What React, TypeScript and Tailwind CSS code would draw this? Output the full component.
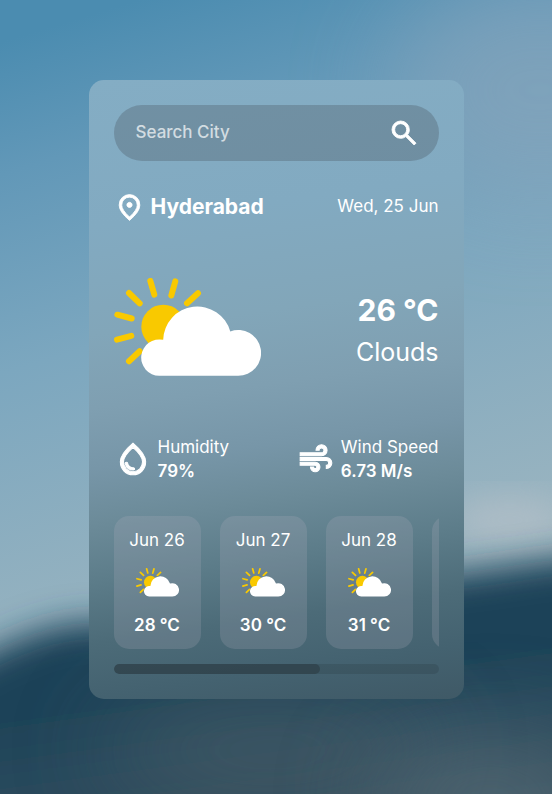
import { useState } from "react";
import type { ReactNode, UIEvent } from "react";

const forecast = [
  { day: "Jun 26", temp: 28 },
  { day: "Jun 27", temp: 30 },
  { day: "Jun 28", temp: 31 },
  { day: "Jun 29", temp: 30 },
  { day: "Jun 30", temp: 29 },
];

const paths = {
  search:
    "M784-120 532-372q-30 24-69 38t-83 14q-109 0-184.5-75.5T120-580q0-109 75.5-184.5T380-840q109 0 184.5 75.5T640-580q0 44-14 83t-38 69l252 252-56 56ZM380-400q75 0 127.5-52.5T560-580q0-75-52.5-127.5T380-760q-75 0-127.5 52.5T200-580q0 75 52.5 127.5T380-400Z",
  location:
    "M480-480q33 0 56.5-23.5T560-560q0-33-23.5-56.5T480-640q-33 0-56.5 23.5T400-560q0 33 23.5 56.5T480-480Zm0 294q122-112 181-203.5T720-552q0-109-69.5-178.5T480-800q-101 0-170.5 69.5T240-552q0 71 59 162.5T480-186Zm0 106Q319-217 239.5-334.5T160-552q0-150 96.5-239T480-880q127 0 223.5 89T800-552q0 100-79.5 217.5T480-80Z",
  drop:
    "M491-200q12-1 20.5-9.5T520-230q0-14-9-22.5t-23-7.5q-41 3-87-22.5T343-375q-2-11-10.5-18t-19.5-7q-14 0-23 10.5t-6 24.5q17 91 80 130t127 35ZM480-80q-137 0-228.5-94T160-408q0-100 79.5-217.5T480-880q161 137 240.5 254.5T800-408q0 140-91.5 234T480-80Zm0-80q104 0 172-70.5T720-408q0-73-60.5-165T480-774Q361-665 300.5-573T240-408q0 107 68 177.5T480-160Z",
  air:
    "M460-160q-50 0-85-35t-35-85h80q0 17 11.5 28.5T460-240q17 0 28.5-11.5T500-280q0-17-11.5-28.5T460-320H80v-80h380q50 0 85 35t35 85q0 50-35 85t-85 35ZM80-560v-80h540q26 0 43-17t17-43q0-26-17-43t-43-17q-26 0-43 17t-17 43h-80q0-59 40.5-99.5T620-840q59 0 99.5 40.5T760-700q0 59-40.5 99.5T620-560H80Zm660 320v-80q26 0 43-17t17-43q0-26-17-43t-43-17H80v-80h660q59 0 99.5 40.5T880-380q0 59-40.5 99.5T740-240Z",
};

function Icon({ name, className }: { name: keyof typeof paths; className: string }) {
  return (
    <svg
      viewBox="0 -960 960 960"
      fill="currentColor"
      stroke="currentColor"
      strokeWidth="26"
      className={`shrink-0 ${className}`}
      aria-hidden="true"
    >
      <path d={paths[name]} />
    </svg>
  );
}

function CloudySun({ className }: { className: string }) {
  return (
    <svg viewBox="0 0 147 98" className={className} aria-hidden="true">
      <g fill="none" stroke="#f9c900" strokeWidth="6" strokeLinecap="round">
        <path d="M36.3 2.9 40.3 16.7M61.3 3.3 57.3 17.5M15 15 25.7 25.3M84 15.3 73 25.3M3.3 36.7 17.7 40.5M3 61.7 17.3 57.9M15 83.3 25.7 73.3" />
      </g>
      <circle cx="49.3" cy="48.7" r="22" fill="#f9c900" />
      <path
        d="M45.2 97.8A18.2 18.2 0 1 1 49.2 61.8A34.2 34.2 0 0 1 116.3 53.4A22.9 22.9 0 1 1 124 97.8Z"
        fill="#fff"
      />
    </svg>
  );
}

function Backdrop() {
  return (
    <svg
      viewBox="0 0 552 794"
      preserveAspectRatio="none"
      className="absolute inset-0 -z-10 h-full w-full"
      aria-hidden="true"
    >
      <defs>
        <linearGradient id="sky" x1="0.25" y1="0" x2="0.42" y2="0.8">
          <stop offset="0" stopColor="#4b8cb0" />
          <stop offset="0.2" stopColor="#6298b8" />
          <stop offset="0.5" stopColor="#7ca7bf" />
          <stop offset="1" stopColor="#9cb5c0" />
        </linearGradient>
        <linearGradient id="hill" x1="0" y1="0" x2="0.3" y2="1">
          <stop offset="0" stopColor="#1b4358" />
          <stop offset="0.5" stopColor="#1e4359" />
          <stop offset="1" stopColor="#39525f" />
        </linearGradient>
        <filter id="soft" x="-30%" y="-30%" width="160%" height="160%">
          <feGaussianBlur stdDeviation="17" />
        </filter>
        <filter id="haze" x="-100%" y="-100%" width="300%" height="300%">
          <feGaussianBlur stdDeviation="50" />
        </filter>
      </defs>
      <rect width="552" height="794" fill="url(#sky)" />
      <ellipse cx="540" cy="90" rx="150" ry="110" fill="#86a4bb" opacity="0.7" filter="url(#haze)" />
      <ellipse cx="510" cy="520" rx="60" ry="24" fill="#b2bfc8" opacity="0.8" filter="url(#soft)" />
      <path
        d="M-80 690C-20 660 30 622 100 622C250 624 340 590 450 574C510 568 560 556 640 552V880H-80Z"
        fill="url(#hill)"
        filter="url(#soft)"
      />
      <ellipse cx="270" cy="750" rx="170" ry="36" fill="#52636b" opacity="0.8" filter="url(#haze)" />
      <ellipse cx="490" cy="800" rx="120" ry="60" fill="#5a6e78" opacity="0.75" filter="url(#haze)" />
    </svg>
  );
}

function Condition({
  icon,
  label,
  value,
}: {
  icon: ReactNode;
  label: string;
  value: string;
}) {
  return (
    <div className="flex items-center gap-1.5">
      {icon}
      <div className="text-[17px] leading-6">
        <h3>{label}</h3>
        <p className="font-semibold">{value}</p>
      </div>
    </div>
  );
}

function Forecast() {
  const [bar, setBar] = useState({ left: 0, width: 63.4 });

  const measure = (el: HTMLUListElement | null) => {
    if (!el || !el.scrollWidth) return;
    const left = (el.scrollLeft / el.scrollWidth) * 100;
    const width = (el.clientWidth / el.scrollWidth) * 100;
    setBar((b) => (b.left === left && b.width === width ? b : { left, width }));
  };

  return (
    <section className="mt-[33px]" aria-label="Forecast">
      <ul
        ref={measure}
        onScroll={(e: UIEvent<HTMLUListElement>) => measure(e.currentTarget)}
        className="flex gap-[19px] overflow-x-auto [scrollbar-width:none]"
      >
        {forecast.map(({ day, temp }) => (
          <li
            key={day}
            className="flex h-[133px] w-[87px] shrink-0 flex-col items-center justify-between rounded-[15px] bg-[#b9b4c4]/20 py-3 text-[17px] leading-6"
          >
            <h4>{day}</h4>
            <CloudySun className="w-[43px]" />
            <p className="font-semibold">{temp} °C</p>
          </li>
        ))}
      </ul>
      <div className="mt-[15px] h-2.5 overflow-hidden rounded-full bg-black/10">
        <div
          className="h-full rounded-full bg-[#2a3840]/55"
          style={{ width: `${bar.width}%`, marginLeft: `${bar.left}%` }}
        />
      </div>
    </section>
  );
}

export default function App() {
  const [city, setCity] = useState("");

  return (
    <div className="relative isolate flex min-h-screen items-start justify-center overflow-hidden px-4 py-20 font-['Inter',sans-serif] text-white">
      <Backdrop />
      <main className="w-full max-w-[375px] rounded-[15px] bg-[linear-gradient(172deg,#84adc4_0%,#82aac1_22%,#82a6b9_38%,#7f9fb1_49%,#7796a8_58%,#6c8b99_66%,#5c7c89_75%,#4c6b78_84%,#446270_92%,#3f5966_100%)] p-[25px]">
        <form
          className="flex h-14 items-center rounded-full bg-[#444f58]/30 pr-[19px] pl-[22px]"
          onSubmit={(e) => e.preventDefault()}
        >
          <input
            type="text"
            aria-label="Search City"
            placeholder="Search City"
            value={city}
            onChange={(e) => setCity(e.target.value)}
            className="min-w-0 flex-1 bg-transparent text-[17px] font-medium text-white outline-none placeholder:text-white/70"
          />
          <button type="submit" aria-label="Search" className="cursor-pointer">
            <Icon name="search" className="size-8" />
          </button>
        </form>

        <section className="mt-[30px] flex items-center justify-between">
          <div className="flex items-center gap-1.5">
            <Icon name="location" className="size-[31px]" />
            <h1 className="text-[21px] leading-8 font-bold">Hyderabad</h1>
          </div>
          <p className="text-[17px]">Wed, 25 Jun</p>
        </section>

        <section className="mt-[55px] flex items-center justify-between">
          <CloudySun className="w-[147px]" />
          <div className="pt-2 text-right">
            <h2 className="text-[30px] leading-[42px] font-bold">26 °C</h2>
            <p className="text-[25px] leading-[42px]">Clouds</p>
          </div>
        </section>

        <section className="mt-[59px] flex items-center justify-between">
          <Condition
            icon={<Icon name="drop" className="size-[38px]" />}
            label="Humidity"
            value="79%"
          />
          <Condition
            icon={<Icon name="air" className="size-[38px]" />}
            label="Wind Speed"
            value="6.73 M/s"
          />
        </section>

        <Forecast />
      </main>
    </div>
  );
}
